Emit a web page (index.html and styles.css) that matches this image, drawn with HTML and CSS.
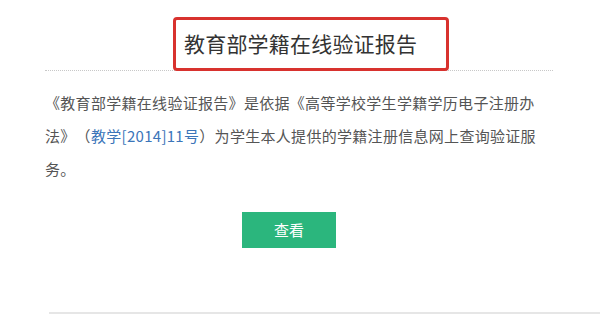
FILE: index.html
```html
<!DOCTYPE html>
<html lang="zh-CN">
<head>
<meta charset="utf-8">
<title>教育部学籍在线验证报告</title>
<link rel="stylesheet" href="styles.css">
</head>
<body>
<div class="page">
  <div class="head">
    <div class="title-box">教育部学籍在线验证报告</div>
  </div>
  <p class="desc">《教育部学籍在线验证报告》是依据《高等学校学生学籍学历电子注册办法》（<a class="link" href="#">教学[2014]11号</a>）为学生本人提供的学籍注册信息网上查询验证服务。</p>
  <div class="actions"><a class="btn" href="#">查看</a></div>
</div>
<div class="rule"></div>
</body>
</html>
```
FILE: styles.css
```css
html, body {
  margin: 0;
  padding: 0;
  background: #fff;
}
body {
  font-family: "Noto Sans CJK SC", "Noto Sans", sans-serif;
  overflow: hidden;
  height: 314px;
  text-spacing-trim: space-all;
}
.page {
  margin-left: 45px;
  width: 508px;
}
.head {
  padding-top: 17px;
  border-bottom: 1px dotted #c8c8c8;
  height: 71px;
  box-sizing: border-box;
}
.title-box {
  margin-left: 128px;
  width: 276px;
  height: 54px;
  box-sizing: border-box;
  border: 3px solid #d8322e;
  border-radius: 4px;
  padding-left: 8px;
  font-size: 21px;
  line-height: 47px;
  letter-spacing: 0.2px;
  color: #333;
  background: #fff;
  position: relative;
}
.desc {
  margin: 15px 0 0 0;
  width: 495px;
  font-size: 15px;
  line-height: 33px;
  letter-spacing: 0.3px;
  color: #555;
}
.link {
  color: #3b75b9;
  text-decoration: none;
}
.actions {
  margin-top: 27px;
  padding-left: 197px;
}
.btn {
  display: block;
  width: 94px;
  height: 36px;
  line-height: 36px;
  text-align: center;
  background: #2bb67d;
  color: #fff;
  font-size: 15px;
  text-decoration: none;
}
.rule {
  margin-left: 49px;
  margin-top: 64px;
  height: 2px;
  background: #e6e6e6;
}
```
